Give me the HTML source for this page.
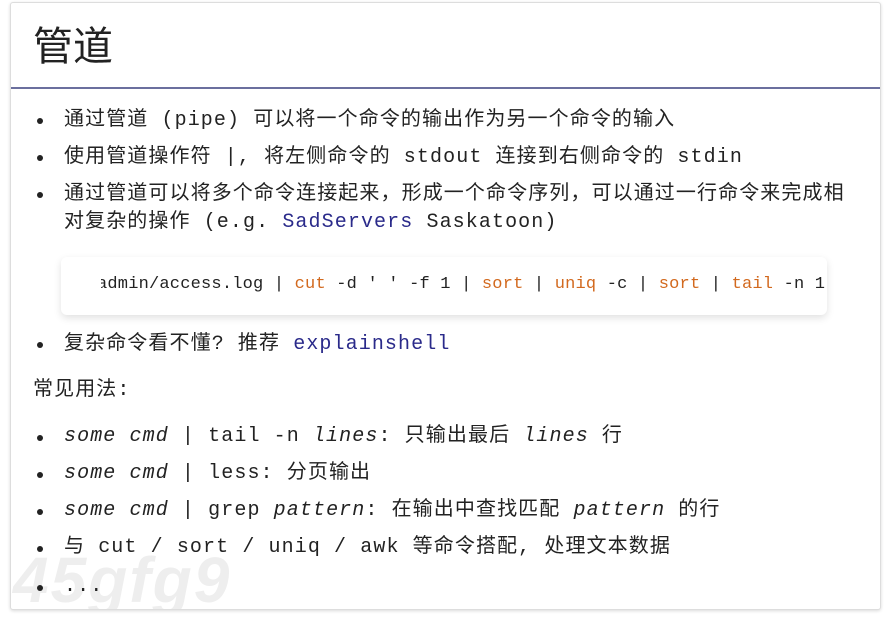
<!DOCTYPE html>
<html><head><meta charset="utf-8"><style>
body{margin:0;width:888px;height:620px;background:#fff;overflow:hidden;font-family:"Liberation Mono","Noto Sans CJK SC",monospace;color:#222;}
.card{position:absolute;left:10px;top:2px;width:869px;height:606px;border:1px solid #ddd;border-radius:3px;box-shadow:0 1px 3px rgba(0,0,0,.15);background:#fff;overflow:hidden}
.title{position:absolute;left:22px;top:12px;font-family:"Noto Sans CJK SC",sans-serif;font-size:40px;color:#222;line-height:56px}
.hr{position:absolute;left:0;right:0;top:84px;height:2px;background:#6b6f9e}
.t{position:absolute;font-size:20px;letter-spacing:1.1px;white-space:nowrap;line-height:24px}
.b{position:absolute;width:6px;height:6px;border-radius:50%;background:#222}
.blue{color:#2a2a8a}
i{font-style:italic}
.cb{position:absolute;left:50px;top:254px;width:766px;height:58px;background:#fff;border-radius:6px;box-shadow:0 3px 8px rgba(0,0,0,.12);overflow:hidden}
.clip{position:absolute;left:40px;top:0;right:0;bottom:0;overflow:hidden}
.cb .t{font-size:17px;letter-spacing:0.2px;top:16px;left:-4px}
.o{color:#d2691e}
.wm{position:absolute;left:2px;top:540px;font-family:"Liberation Sans",sans-serif;font-weight:bold;font-style:italic;font-size:64px;color:#eeeeee;letter-spacing:2px}
</style></head><body>
<div class="card">
<div class="wm">45gfg9</div>
<div class="title">管道</div>
<div class="hr"></div>
<div class="b" style="left:26px;top:115px"></div><div class="t" style="left:53px;top:106px">通过管道 (pipe) 可以将一个命令的输出作为另一个命令的输入</div>
<div class="b" style="left:26px;top:152px"></div><div class="t" style="left:53px;top:143px">使用管道操作符 |, 将左侧命令的 stdout 连接到右侧命令的 stdin</div>
<div class="b" style="left:26px;top:189px"></div><div class="t" style="left:53px;top:180px">通过管道可以将多个命令连接起来，形成一个命令序列，可以通过一行命令来完成相</div>
<div class="t" style="left:53px;top:208px">对复杂的操作 (e.g. <span class="blue">SadServers</span> Saskatoon)</div>
<div class="cb"><div class="clip"><div class="t">admin/access.log | <span class="o">cut</span> -d ' ' -f 1 | <span class="o">sort</span> | <span class="o">uniq</span> -c | <span class="o">sort</span> | <span class="o">tail</span> -n 1</div></div></div>
<div class="b" style="left:26px;top:339px"></div><div class="t" style="left:53px;top:330px">复杂命令看不懂? 推荐 <span class="blue">explainshell</span></div>
<div class="t" style="left:22px;top:376px">常见用法:</div>
<div class="b" style="left:26px;top:432px"></div><div class="t" style="left:53px;top:422px"><i>some cmd</i> | tail -n <i>lines</i>: 只输出最后 <i>lines</i> 行</div>
<div class="b" style="left:26px;top:469px"></div><div class="t" style="left:53px;top:459px"><i>some cmd</i> | less: 分页输出</div>
<div class="b" style="left:26px;top:506px"></div><div class="t" style="left:53px;top:496px"><i>some cmd</i> | grep <i>pattern</i>: 在输出中查找匹配 <i>pattern</i> 的行</div>
<div class="b" style="left:26px;top:543px"></div><div class="t" style="left:53px;top:533px">与 cut / sort / uniq / awk 等命令搭配, 处理文本数据</div>
<div class="b" style="left:26px;top:582px"></div><div class="t" style="left:53px;top:572px">...</div>
</div>
</body></html>
